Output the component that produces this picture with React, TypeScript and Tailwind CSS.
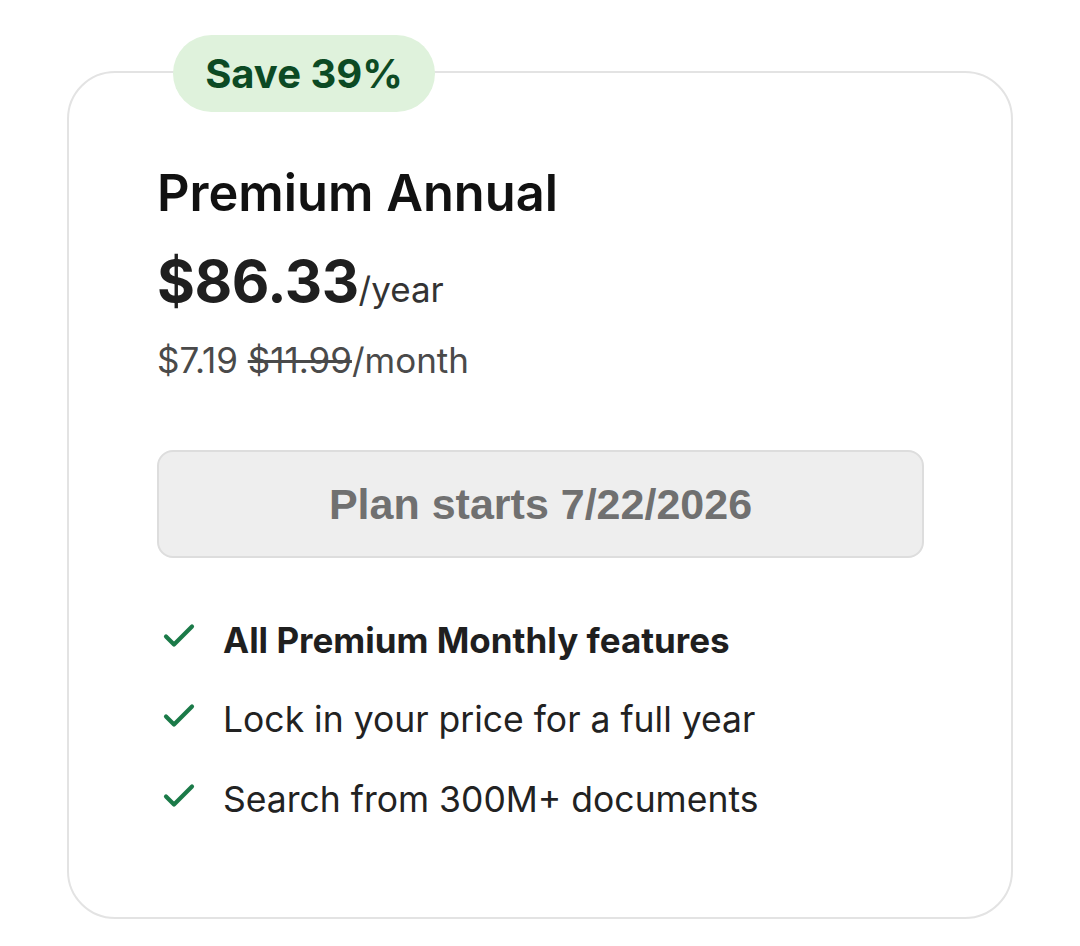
import { ReactNode } from "react";

type Feature = {
  text: string;
  bold?: boolean;
};

const features: Feature[] = [
  { text: "All Premium Monthly features", bold: true },
  { text: "Lock in your price for a full year" },
  { text: "Search from 300M+ documents" },
];

function Check() {
  return (
    <svg width="32" height="26" viewBox="0 0 32 26" fill="none" className="shrink-0">
      <polyline
        points="3,13.5 11,21.5 29,3.5"
        stroke="#1b7a48"
        strokeWidth="4.2"
        strokeLinecap="round"
        strokeLinejoin="round"
      />
    </svg>
  );
}

function FeatureRow({ children, bold }: { children: ReactNode; bold?: boolean }) {
  return (
    <li className="flex h-[80px] items-center">
      <div className="w-[66px] pl-[6px] -mt-[8px]">
        <Check />
      </div>
      <span
        className={
          bold
            ? "text-[35px] font-bold text-[#1f1f1f]"
            : "text-[35.5px] font-normal text-[#222]"
        }
      >
        {children}
      </span>
    </li>
  );
}

export default function App() {
  return (
    <div className="min-h-[946px] w-[1080px] bg-white pt-[71px] pl-[67px] font-['Inter',_'Noto_Sans',_sans-serif]">
      <div className="relative h-[848px] w-[946px] rounded-[48px] border-2 border-[#e3e3e3] px-[88px] pt-[92px]">
        {/* discount badge straddling the top border */}
        <div className="absolute -top-[38px] left-[104px] flex h-[77px] w-[262px] items-center justify-center rounded-full bg-[#dff2dc]">
          <span className="text-[40px] font-bold leading-none text-[#0c4a24]">Save 39%</span>
        </div>

        <h2 className="h-[56px] text-[50.5px] font-semibold leading-[56px] text-[#111]">
          Premium Annual
        </h2>

        <div className="mt-[28px] flex h-[64px] items-baseline leading-[64px]">
          <span className="text-[58px] font-bold tracking-[-0.5px] text-[#1f1f1f]">$86.33</span>
          <span className="text-[35px] text-[#333]">/year</span>
        </div>

        <p className="mt-[27px] h-[40px] text-[35px] leading-[40px] text-[#4a4a4a]">
          $7.19 <span className="line-through">$11.99</span>/month
        </p>

        <button
          disabled
          className="mt-[70px] flex h-[108px] w-[767px] items-center justify-center rounded-[16px] border-2 border-[#dddddd] bg-[#eeeeee] font-['Liberation_Sans',_Arial,_sans-serif] text-[43px] font-bold text-[#707070]"
        >
          Plan starts 7/22/2026
        </button>

        <ul className="mt-[42px]">
          {features.map((f) => (
            <FeatureRow key={f.text} bold={f.bold}>
              {f.text}
            </FeatureRow>
          ))}
        </ul>
      </div>
    </div>
  );
}
